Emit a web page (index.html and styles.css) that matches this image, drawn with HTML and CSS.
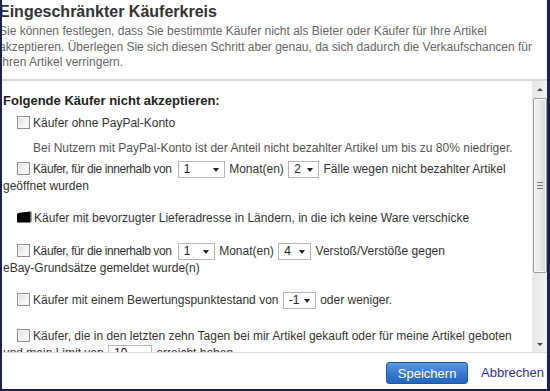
FILE: index.html
```html
<!DOCTYPE html>
<html lang="de">
<head>
<meta charset="utf-8">
<title>Eingeschränkter Käuferkreis</title>
<link rel="stylesheet" href="styles.css">
</head>
<body>
<div class="frame">
  <header class="head">
    <h1 class="title">Eingeschränkter Käuferkreis</h1>
    <p class="desc">Sie können festlegen, dass Sie bestimmte Käufer nicht als Bieter oder Käufer für Ihre Artikel akzeptieren. Überlegen Sie sich diesen Schritt aber genau, da sich dadurch die Verkaufschancen für Ihren Artikel verringern.</p>
  </header>
  <div class="scrollwrap">
    <div class="content">
      <div class="heading">Folgende Käufer nicht akzeptieren:</div>
      <div class="row r1"><span class="cb"></span>Käufer ohne PayPal-Konto</div>
      <div class="note">Bei Nutzern mit PayPal-Konto ist der Anteil nicht bezahlter Artikel um bis zu 80% niedriger.</div>
      <div class="row r2"><span class="cb"></span><span class="tight">Käufer, für die innerhalb von</span> <span class="sel w47">1<i class="arr"></i></span> Monat(en) <span class="sel w31">2<i class="arr"></i></span> Fälle wegen nicht bezahlter Artikel geöffnet wurden</div>
      <div class="row r3"><svg class="flag" width="16" height="13" viewBox="0 0 16 13"><path d="M1 4 C1 2.5 2 2 3.5 1.8 L14.5 0.5 L14.5 11.5 L1 11.5 Z" fill="#000"/><path d="M14.5 0.5 L15.5 1 L15.5 10.5 L14.5 11.5 Z" fill="#444"/></svg>Käufer mit bevorzugter Lieferadresse in Ländern, in die ich keine Ware verschicke</div>
      <div class="row r4"><span class="cb"></span><span class="tight">Käufer, für die innerhalb von</span> <span class="sel w37">1<i class="arr"></i></span> Monat(en) <span class="sel w33">4<i class="arr"></i></span> Verstoß/Verstöße gegen <span class="nw">eBay-Grundsätze</span> gemeldet wurde(n)</div>
      <div class="row r5"><span class="cb"></span>Käufer mit einem Bewertungspunktestand von <span class="sel w33">-1<i class="arr"></i></span> oder weniger.</div>
      <div class="row r6"><span class="cb"></span>Käufer, die in den letzten zehn Tagen bei mir Artikel gekauft oder für meine Artikel geboten und mein Limit von <span class="sel w44">10<i class="arr"></i></span> erreicht haben</div>
    </div>
    <div class="scrollbar">
      <div class="sb-btn"><i class="tri up"></i></div>
      <div class="sb-track">
        <div class="thumb"><span class="grip"></span></div>
      </div>
      <div class="sb-btn"><i class="tri down"></i></div>
    </div>
  </div>
  <footer class="foot">
    <button class="save">Speichern</button>
    <a class="cancel" href="#">Abbrechen</a>
  </footer>
</div>
</body>
</html>
```
FILE: styles.css
```css
* { box-sizing: border-box; }
html, body { margin: 0; padding: 0; }
body {
  width: 550px;
  height: 391px;
  overflow: hidden;
  background: #fff;
  font-family: "Liberation Sans", Arial, sans-serif;
  color: #333;
}
.frame {
  position: relative;
  width: 550px;
  height: 391px;
  display: flex;
  flex-direction: column;
  overflow: hidden;
}
.frame::after {
  content: "";
  position: absolute;
  inset: 0;
  border-left: 2px solid #1c2152;
  border-right: 3px solid #1c2152;
  border-bottom: 2px solid #1c2152;
  pointer-events: none;
}
.head {
  margin-left: -1px;
  height: 79px;
  flex: none;
}
.title {
  margin: 0;
  padding-top: 2px;
  font-size: 16px;
  line-height: 20px;
  font-weight: bold;
  color: #333;
}
.desc {
  margin: 0;
  padding-top: 2px;
  padding-right: 10px;
  font-size: 12px;
  line-height: 15.5px;
  color: #666;
}
.scrollwrap {
  flex: none;
  height: 274px;
  display: flex;
  border-top: 2px solid #d6d6d6;
  border-bottom: 1px solid #dcdcdc;
  margin-right: 3px;
}
.content {
  flex: 1;
  overflow: hidden;
  padding: 12px 0 0 3px;
  font-size: 12px;
  line-height: 17px;
  color: #333;
}
.heading {
  font-size: 13px;
  line-height: 16px;
  font-weight: bold;
  color: #222;
}
.row {
  text-indent: 14px;
  padding-right: 2px;
}
.tight { letter-spacing: -0.4px; margin-right: 2px; }
.nw { white-space: nowrap; }
.r1 { margin-top: 6px; }
.note { padding-left: 30px; margin-top: 8px; color: #555; }
.r2 { margin-top: 4px; }
.r3 { margin-top: 15px; }
.r4 { margin-top: 16px; }
.r5 { margin-top: 15px; }
.r6 { margin-top: 19px; }
.cb {
  display: inline-block;
  width: 13px;
  height: 13px;
  margin-right: 3px;
  vertical-align: -2px;
  border: 1px solid #8e8f8f;
  background: linear-gradient(135deg, #dcdcdc 0%, #f4f4f4 60%, #fbfbfb 100%);
  box-shadow: inset 0 0 0 1px #f4f4f4;
  text-indent: 0;
}
.flag {
  display: inline-block;
  vertical-align: -2px;
  margin-right: 2px;
  margin-left: -1px;
}
.sel {
  display: inline-flex;
  align-items: center;
  justify-content: space-between;
  height: 17px;
  padding: 0 5px 0 5px;
  border: 1px solid #b5b5b5;
  background: #fff;
  text-indent: 0;
  line-height: 15px;
  vertical-align: baseline;
  color: #222;
  margin: 0 1px;
}
.w47 { width: 47px; }
.w31 { width: 31px; }
.w37 { width: 37px; }
.w33 { width: 33px; }
.w44 { width: 44px; }
.arr {
  display: block;
  width: 0;
  height: 0;
  border-left: 3.5px solid transparent;
  border-right: 3.5px solid transparent;
  border-top: 4px solid #222;
  margin-top: 1px;
}
.scrollbar {
  flex: none;
  width: 15px;
  display: flex;
  flex-direction: column;
  background: linear-gradient(90deg, #e6e6e6, #f2f2f2);
  border-left: 1px solid #ececec;
}
.sb-btn {
  height: 16px;
  display: flex;
  align-items: center;
  justify-content: center;
  flex: none;
}
.tri {
  width: 0;
  height: 0;
  border-left: 3px solid transparent;
  border-right: 3px solid transparent;
}
.tri.up { border-bottom: 3px solid #4a4a4a; }
.tri.down { border-top: 3px solid #4a4a4a; }
.sb-track {
  flex: 1;
  padding-top: 1px;
}
.thumb {
  height: 175px;
  border: 1px solid #9a9a9a;
  border-radius: 2px;
  background: linear-gradient(90deg, #f2f2f2 0%, #e8e8e8 50%, #d6d6d6 100%);
  box-shadow: inset 0 0 0 1px #fafafa;
  display: flex;
  align-items: center;
  justify-content: center;
}
.grip {
  width: 6px;
  height: 7px;
  background: repeating-linear-gradient(180deg, #7a7a7a 0 1px, transparent 1px 3px);
}
.foot {
  flex: 1;
  display: flex;
  align-items: flex-start;
  justify-content: flex-end;
  gap: 13px;
  padding: 9px 6px 0 0;
}
.save {
  width: 82px;
  height: 22px;
  border: 1px solid #1d57a8;
  border-radius: 3px;
  background: linear-gradient(180deg, #5c9ae0 0%, #3b7dd1 45%, #2465bd 100%);
  color: #fff;
  font-family: "Liberation Sans", Arial, sans-serif;
  font-size: 13px;
  padding: 0;
}
.cancel {
  margin-top: 3px;
  font-size: 13px;
  color: #2e3192;
  text-decoration: none;
}
```
